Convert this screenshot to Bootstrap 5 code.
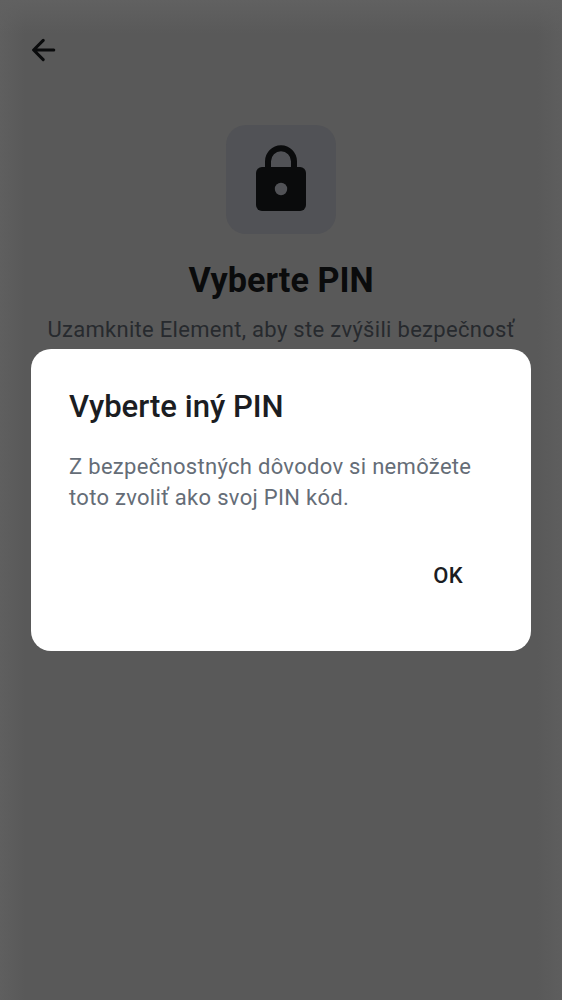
<!DOCTYPE html>
<html lang="sk">
<head>
<meta charset="utf-8">
<meta name="viewport" content="width=device-width, initial-scale=1">
<title>Vyberte PIN</title>
<link href="https://cdn.jsdelivr.net/npm/bootstrap@5.3.0/dist/css/bootstrap.min.css" rel="stylesheet">
<style>
body{font-family:Roboto,"Noto Sans",sans-serif;background:#595959;color:#0a0b0c}
.screen{height:1000px;background:linear-gradient(#616161,#59595900 34px),linear-gradient(90deg,#5f5f5f,#595959 25px,#595959 calc(100% - 25px),#5e5e5e)}
.topbar{height:100px;padding-left:32px}
.lock-tile{width:110px;height:109px;border-radius:20px;background:#515256;margin-top:25px}
.heading{font-size:34.2px;font-weight:700;line-height:42px;margin-top:25px}
.intro{font-size:22px;line-height:31px;letter-spacing:.3px;color:#272a2e;margin-top:13px}
.overlay{padding-left:31px;padding-right:31px;padding-top:349px}
.dialog-card{height:301.5px;border-radius:20px;background:#fff;padding:37px 38px}
.dialog-title{font-size:31.1px;line-height:42px;font-weight:500;color:#1b1d22}
.dialog-text{font-size:22px;line-height:31px;letter-spacing:.3px;color:#656d77;margin-top:23px}
.ok{font-size:22px;line-height:31px;font-weight:500;letter-spacing:.3px;color:#1b1d22;margin-top:47px;padding:0 30px}
</style>
</head>
<body>
<main class="screen position-relative overflow-hidden">
<header class="topbar d-flex align-items-center"><svg width="24" height="24" viewBox="0 0 24 24" fill="none" stroke="#0a0b0c" stroke-width="3" stroke-linecap="round" stroke-linejoin="round"><path d="M21.8 12H2M11.2 2.4 1.6 12l9.6 9.6"/></svg></header>
<section class="d-flex flex-column align-items-center text-center">
<div class="lock-tile d-flex justify-content-center"><svg width="50" height="109" viewBox="0 0 50 109"><path d="M12 44V36.2a13 13 0 0 1 26 0V44" fill="none" stroke="#0a0b0c" stroke-width="6"/><rect y="42" width="50" height="44" rx="6" fill="#0a0b0c"/><circle cx="25" cy="64" r="6.2" fill="#515256"/></svg></div>
<h1 class="heading mb-0">Vyberte PIN</h1>
<p class="intro mb-0 text-nowrap">Uzamknite Element, aby ste zvýšili bezpečnosť</p>
</section>
<div class="overlay position-absolute top-0 start-0 w-100 h-100">
<div class="dialog-card w-100" role="dialog" aria-modal="true">
<h2 class="dialog-title mb-0">Vyberte iný PIN</h2>
<p class="dialog-text mb-0">Z bezpečnostných dôvodov si nemôžete<br>toto zvoliť ako svoj PIN kód.</p>
<div class="d-flex justify-content-end"><button class="ok btn border-0">OK</button></div>
</div>
</div>
</main>
<script src="https://cdn.jsdelivr.net/npm/bootstrap@5.3.0/dist/js/bootstrap.bundle.min.js"></script>
</body>
</html>
